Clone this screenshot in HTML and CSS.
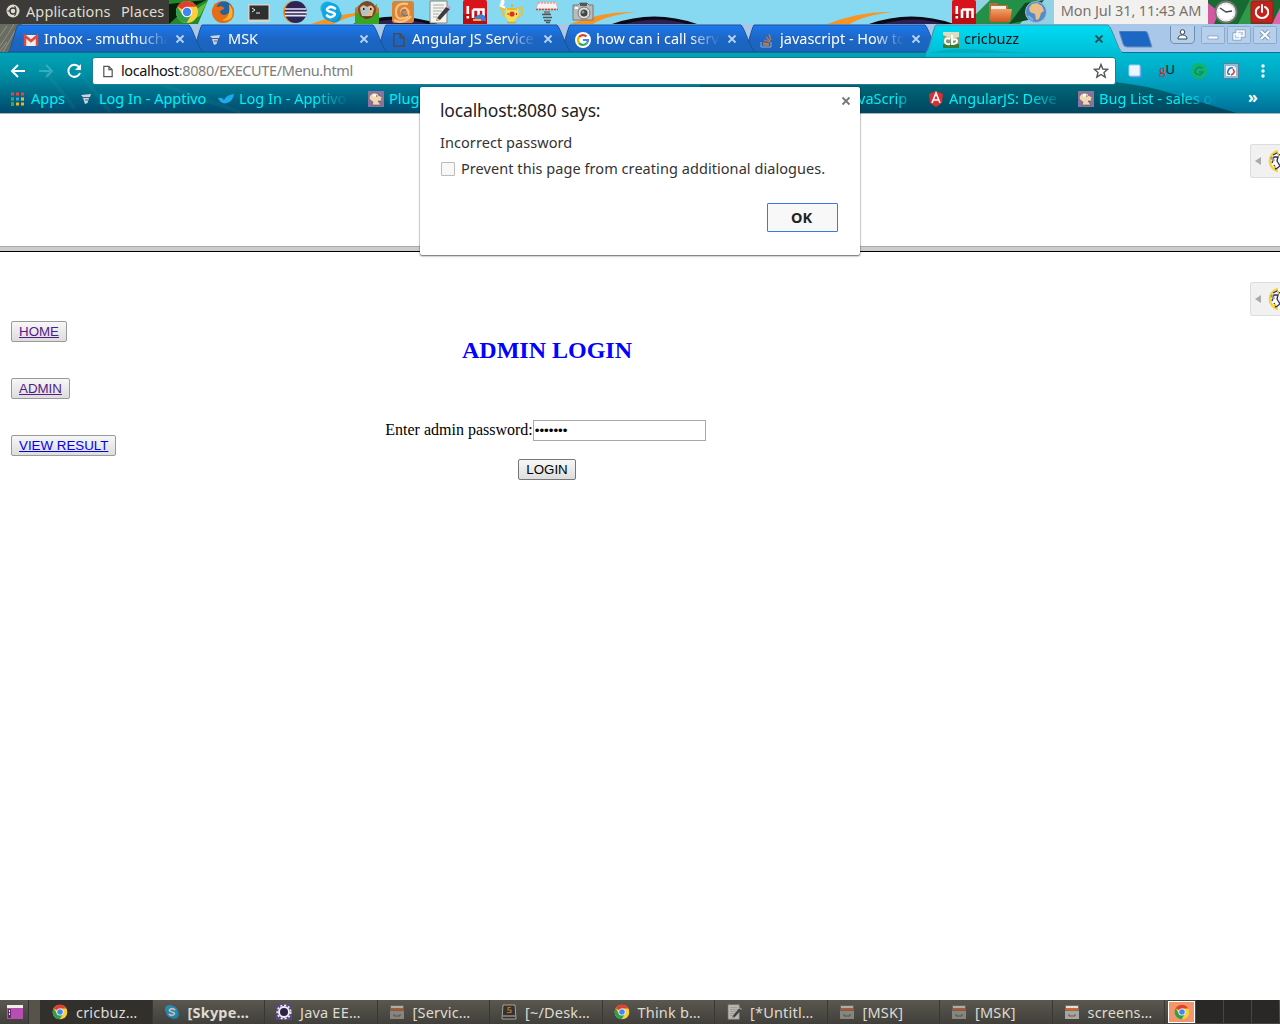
FILE: index.html
```html
<!DOCTYPE html>
<html lang="en">
<head>
<meta charset="utf-8">
<title>cricbuzz</title>
<link rel="stylesheet" href="styles.css">
</head>
<body>
<svg class="defs" width="0" height="0">
  <symbol id="chrome" viewBox="0 0 24 24">
    <circle cx="12" cy="12" r="11" fill="#f9cf3d"/>
    <path d="M12 12 2.400 6.500A11 11 0 0 1 21.600 6.800H12Z" fill="#e1402f"/>
    <path d="M2.400 6.500A11 11 0 0 0 11.500 23L16.500 14.500 12 12 7.500 14.700Z" fill="#2f9e4f"/>
    <circle cx="12" cy="12" r="5.300" fill="#fff"/><circle cx="12" cy="12" r="4.200" fill="#4285f4"/>
  </symbol>
  <symbol id="m" viewBox="0 0 24 24">
    <rect width="24" height="24" rx="2" fill="#d8131b"/><path d="M0 14H24V24H0Z" fill="#b90d14"/>
    <path d="M4.800 6V14M4.800 16V18.500M10 18V9.500M10 9.500H15.500V18M15.500 9.500H20.500V18" fill="none" stroke="#fff" stroke-width="2.600"/>
  </symbol>
  <symbol id="skype" viewBox="0 0 24 24">
    <circle cx="8.500" cy="8.500" r="7" fill="#18aee8"/><circle cx="15.500" cy="15.500" r="7" fill="#089ad8"/><circle cx="12" cy="12" r="9.200" fill="#12a5e2"/>
    <path d="M16 8.500Q12 5.500 9 8T12 12T14.500 16Q11 18.500 8 15.500" fill="none" stroke="#fff" stroke-width="2.600" stroke-linecap="round"/>
  </symbol>
  <symbol id="apptivo" viewBox="0 0 16 16">
    <path d="M3 4 13 3 12 6H5ZM5 7H11L9.500 12 7 13Z" fill="#cbd5e2"/><path d="M4 6.500H11M7 9H10" stroke="#49617e"/>
  </symbol>
  <symbol id="close" viewBox="0 0 10 10"><path d="M1.500 1.500 8.500 8.500M8.500 1.500 1.500 8.500" fill="none" stroke="currentColor" stroke-width="1.800"/></symbol>
  <symbol id="tabshape" viewBox="0 0 196 28">
    <path d="M0 28 C3 26 8 3 10 1H181C184 3 191 26 195 28Z" fill="url(#tabblue)" stroke="#1c5291"/>
  </symbol>
  <symbol id="camel" viewBox="0 0 16 16">
    <rect width="16" height="16" fill="#8b739d"/><path d="M1 7Q1 4 5 2Q8 1 10 4L14 6Q16 9 13 10L10 10 13 14H4L5 11 2 9Z" fill="#efd9b5" stroke="#65495b" stroke-width=".6"/><path d="M5 4.500H10" stroke="#fff" stroke-width="2"/><path d="M8 5H9.500M13 8h1" stroke="#333"/>
  </symbol>
  <symbol id="drawer" viewBox="0 0 16 16">
    <path d="M1 1H15V15H1Z" fill="#776f68"/><path d="M2 2H14V4H2Z" fill="#e8dfcd"/><path d="M2 4H14V6H2Z" fill="#d6642b"/><path d="M1 7H15V15H1Z" fill="#aaa59e"/><path d="M5 10V12H11V10" fill="none" stroke="#5b5752"/>
  </symbol>
  <symbol id="note" viewBox="0 0 24 24">
    <path d="M3 1H20V23H3Z" fill="#f4f4f1" stroke="#858580"/><path d="M6 5H17M6 8H17M6 11H15M6 14H12M6 17H10" stroke="#aaa"/><path d="M10 18 19 7 23 9 13 20 9 21Z" fill="#3c3b42"/><path d="M19 7 20 5 24 7 23 9Z" fill="#d796cb"/><path d="M10 18 13 20 9 21Z" fill="#ecc269"/>
  </symbol>
  <symbol id="eclipse" viewBox="0 0 24 24">
    <circle cx="11" cy="12" r="11" fill="#f29420"/><circle cx="12.700" cy="12" r="11" fill="#2c2455"/><path d="M2 9H23M2 12.300H24M2 15.600H23" stroke="#e8e4f3" stroke-width="1.700"/>
  </symbol>
  <symbol id="page" viewBox="0 0 12 14"><path d="M1.500 1.500H7L10.500 5V12.500H1.500ZM7 1.500V5H10.500" fill="none" stroke="currentColor" stroke-width="1.300"/></symbol>
  <symbol id="bee" viewBox="0 0 20 24">
    <circle cx="14" cy="12" r="10.500" fill="#fafafa"/><path d="M13 2A10.200 10.200 0 0 0 13 22" fill="none" stroke="#f4d341" stroke-width="2.500"/>
    <path d="M8 6 12 4 14 6 18 4M7 14 9 8 13 8 12 12 15 17 11 20 9 16" fill="none" stroke="#32304c" stroke-width="1.300"/><path d="M6 8 9 12M17 10 20 14" stroke="#999" stroke-width="2.500"/><path d="M9 18H11M15 15H17M12 5H14" stroke="#eac72e" stroke-width="1.800"/>
  </symbol>
  <linearGradient id="tabblue" x1="0" y1="0" x2="0" y2="1"><stop stop-color="#1b7af0"/><stop offset=".5" stop-color="#1d66c5"/><stop offset="1" stop-color="#1964bd"/></linearGradient>
  <linearGradient id="sea" x1="0" y1="0" x2="0" y2="1"><stop stop-color="#00a5b8"/><stop offset=".35" stop-color="#008fa5"/><stop offset="1" stop-color="#00476a"/></linearGradient>
  <linearGradient id="searight" x1="0" y1="0" x2="0" y2="1"><stop stop-color="#00bfd6"/><stop offset=".5" stop-color="#009fbd"/><stop offset="1" stop-color="#006d96"/></linearGradient>
  <linearGradient id="hill" x1="0" y1="0" x2="0" y2="1"><stop stop-color="#00707c"/><stop offset="1" stop-color="#00445f"/></linearGradient>
  <linearGradient id="cyan" x1="0" y1="0" x2="0" y2="1"><stop stop-color="#00dcf4"/><stop offset="1" stop-color="#00bfd5"/></linearGradient>
  <linearGradient id="folder" x1="0" y1="0" x2="0" y2="1"><stop stop-color="#f3a262"/><stop offset="1" stop-color="#d25220"/></linearGradient>
</svg>

<header class="panel">
  <svg class="art" viewBox="0 0 1280 24">
    <rect width="1280" height="24" fill="#86d9f1"/>
    <path d="M169 0H208L198 24H169Z" fill="#22882c"/><path d="M169 4 206 0 180 14 169 24Z" fill="#071f0b"/><path d="M182 19 207 2 200 16 184 23Z" fill="#63be3b"/>
    <g id="waves"><path d="M311 24Q345 11 376 12Q346 16 334 24Z" fill="#f79520"/><path d="M353 24Q395 9 438 24Z" fill="#080a14"/><path d="M366 24Q398 15 428 24Z" fill="#2c2057"/></g>
    <use href="#waves" x="259"/><use href="#waves" x="516"/>
    <path d="M976 0H1208V24H976Z" fill="#248f47"/><path d="M976 0H990L976 14M1020 24 1038 0H1054V24Z" fill="#91d2e5"/><path d="M1009 24 1025 3 1044 0 1028 20Z" fill="#0d4821"/>
    <path d="M1208 0H1280V24H1208Z" fill="#176b32"/><path d="M1208 3 1219 12 1214 24H1208Z" fill="#d458a1"/><path d="M1238 24 1250 0H1270L1250 24Z" fill="#2e9a4a"/><path d="M1272 24 1280 8V24Z" fill="#dd67ad"/>
  </svg>
  <div class="menu">
    <svg width="14" height="14" viewBox="0 0 14 14"><circle cx="7" cy="7" r="6.500" fill="#dfdbd2"/><circle cx="7" cy="7" r="3" fill="none" stroke="#3c3b37" stroke-width="1.400"/><path d="M8.500 2 10 4.500M1.500 7H4M8.500 12 10 9.500" stroke="#3c3b37"/></svg>
    <span class="apps-label">Applications</span><span class="places">Places</span>
  </div>
  <div class="launchers">
    <svg><use href="#chrome"/></svg>
    <svg viewBox="0 0 24 24"><circle cx="12" cy="12" r="11" fill="#e66a16"/><circle cx="13" cy="9.500" r="8" fill="#24629d"/><path d="M1 10 4 3 6 7Q13 5 13 9L9 11Q9 15 14 15L20 12 22 7Q26 22 12 23 2 22 1 10Z" fill="#e86c15"/><path d="M18 4Q23 9 21 17 17 22 11 20 20 18 18 4Z" fill="#f7b52b"/></svg>
    <svg viewBox="0 0 24 24"><rect x="1" y="4" width="22" height="18" rx="1" fill="#d3d3cf"/><path d="M2.500 5.500H21.500V19.500H2.500Z" fill="#2d302e"/><path d="M5 8 8 10 5 12M9 13H13" stroke="#eee" fill="none"/></svg>
    <svg><use href="#eclipse"/></svg>
    <svg><use href="#skype"/></svg>
    <svg viewBox="0 0 24 24"><path d="M0 24V9L4 13 3 5 9 8 14 3 17 8 22 4 21 12 24 11V24Z" fill="#38a525"/><circle cx="3.500" cy="10" r="3.500" fill="#bf783c"/><circle cx="20.500" cy="10" r="3.500" fill="#bf783c"/><circle cx="12" cy="10" r="9" fill="#7b4827"/><path d="M5 8Q8 3 12 7 17 3 19 9L17 16H7Z" fill="#e7bd89"/><circle cx="10" cy="11" r="4.500" fill="#a9c4da" opacity=".8"/><path d="M15 9h1.500M8 9h1.500" stroke="#222" stroke-width="2"/><path d="M8 17Q12 20 16 16" stroke="#632b15" fill="none"/><path d="M0 24 2 15 5 20 8 17 11 22 15 19 18 22 21 15 24 24Z" fill="#38a525"/></svg>
    <svg viewBox="0 0 24 24"><rect x="1" y="1" width="22" height="22" rx="3" fill="#d98539"/><path d="M17 4Q5 2 5 12T16 17Q20 11 14 8 9 9 11 13M3 20Q12 25 20 16" fill="none" stroke="#ffc27a" stroke-width="2.200"/><path d="M15 10Q10 9 11 13T17 15" fill="none" stroke="#6a7991" stroke-width="1.500"/></svg>
    <svg><use href="#note"/></svg>
    <svg viewBox="0 0 24 24"><use href="#m"/><path d="M12 17Q17 12 22 16L23 21H11Z" fill="#3c7eda"/><path d="M10 20H18" stroke="#eeb13d" stroke-width="2"/></svg>
    <svg viewBox="0 0 24 24"><path d="M2 0Q5 1 3 4T6 8" stroke="#fff" stroke-width="3.500" fill="none"/><path d="M18 8H23V14L18 18M7 10 2 8 4 14 8 18" stroke="#e6c23b" stroke-width="1.800" fill="none"/><path d="M7 8H19L20 15 16 20V23H9V20L6 16Z" fill="#f7dc58"/><path d="M13 4V7M8 9H18M8 22.500H17" stroke="#d9ad2b" stroke-width="1.600"/><circle cx="13" cy="14" r="2.600" fill="#d53323"/><path d="M8.500 14h1M17 14h1" stroke="#b12e1b" stroke-width="2"/></svg>
    <svg viewBox="0 0 24 24"><path d="M3 2H21L23 9H1Z" fill="#f7f3f3" stroke="#bbb"/><path d="M3 3H21" stroke="#d87a76" stroke-dasharray="2 1"/><path d="M1 9.500H23" stroke="#db4135" stroke-width="1.500" stroke-dasharray="2 1"/><path d="M9 11V14H15V11" fill="#888"/><path d="M7 14.500H16M8 17.500H17M9 20.500H16M11 22.500H15" stroke="#555" stroke-width="1.500"/></svg>
    <svg viewBox="0 0 24 24"><path d="M2 5H7L9 3H16L18 5H22V20H2Z" fill="#bbbcba" stroke="#777"/><rect x="9" y="3" width="7" height="3" fill="#555"/><circle cx="13" cy="13" r="6" fill="#ddd" stroke="#777"/><circle cx="13" cy="13" r="3.500" fill="#444"/><circle cx="12" cy="12" r="1.500" fill="#89a"/><path d="M4 8H7" stroke="#fff" stroke-width="2"/></svg>
  </div>
  <div class="tray">
    <svg><use href="#m"/></svg>
    <svg viewBox="0 0 24 24"><path d="M1 3H9L11 5H20V20H1Z" fill="#b96a38"/><path d="M3 6H18V18H3Z" fill="#eee"/><path d="M3 9H24L22 22H2Z" fill="url(#folder)"/></svg>
    <svg viewBox="0 0 24 24"><circle cx="12" cy="12" r="10.500" fill="#548bc9" stroke="#9abde1"/><path d="M8 4 13 3 18 6 20 11 17 13 15 19 12 20 11 14 6 12 5 8Z" fill="#edbd86"/><path d="M4 16 9 20" stroke="#81b2e6" stroke-width="2"/></svg>
    <time class="clock">Mon Jul 31, 11:43 AM</time>
    <svg class="dial" viewBox="0 0 24 24"><circle cx="12" cy="12" r="10.500" fill="#eee" stroke="#777772" stroke-width="1.800"/><circle cx="12" cy="12" r="8" fill="#fff" stroke="#ccc" stroke-dasharray="1 3"/><path d="M6 8 12 12 18 11" stroke="#444" stroke-width="1.500" fill="none"/></svg>
    <svg viewBox="0 0 24 24"><rect x="1" y="1" width="22" height="22" rx="2" fill="#c5201c" stroke="#92201c"/><path d="M9 7Q5 9 6 14 8 18 12 18T18 14Q19 9 15 7M12 5V12" stroke="#fff" stroke-width="2" fill="none" stroke-linecap="round"/></svg>
  </div>
</header>

<div class="browser">
  <svg class="art" viewBox="0 0 1280 90">
    <rect width="1280" height="90" fill="#a8c7e9"/><path d="M0 0H22L8 28H0Z" fill="#686c61"/><path d="M0 22 8 10 14 0M0 12 7 2M3 28 15 7M0 27 7 18" stroke="#96958a"/>
    <rect y="28" width="1280" height="62" fill="url(#sea)"/><path d="M926 28H1280V90H926Z" fill="url(#searight)"/>
    <path d="M700 61Q800 56 926 55Q1090 48 1160 66L1240 90H700Z" fill="url(#hill)"/>
    <g stroke="#3bacb5" fill="none" opacity=".1" stroke-width="4"><path d="M40 40 75 85M70 35 110 88M160 60 240 88M200 34 350 38"/></g>
    <path d="M0 28.500H926M1122 28.500H1280" stroke="#146e8f"/><path d="M0 89.500H1280" stroke="#a5b3bb"/>
  </svg>
  <div class="tabs">
    <div class="tab t1"><svg class="shape"><use href="#tabshape"/></svg><svg class="fav" viewBox="0 0 16 16"><path d="M1 3H15V14H1Z" fill="#eee"/><path d="M2 14V4L8 9 14 4V14" fill="none" stroke="#df4b3e" stroke-width="2.500"/></svg><span>Inbox - smuthucha</span><svg class="x"><use href="#close"/></svg></div>
    <div class="tab t2"><svg class="shape"><use href="#tabshape"/></svg><svg class="fav"><use href="#apptivo"/></svg><span>MSK</span><svg class="x"><use href="#close"/></svg></div>
    <div class="tab t3"><svg class="shape"><use href="#tabshape"/></svg><svg class="fav dark"><use href="#page"/></svg><span>Angular JS Service</span><svg class="x"><use href="#close"/></svg></div>
    <div class="tab t4"><svg class="shape"><use href="#tabshape"/></svg><svg class="fav" viewBox="0 0 16 16"><circle cx="8" cy="8" r="8" fill="#fff"/><g fill="none" stroke-width="2.200"><path d="M11.500 4.500A5 5 0 0 0 4 5" stroke="#e43e2b"/><path d="M4 5A5 5 0 0 0 4 11" stroke="#f4b400"/><path d="M4 11A5 5 0 0 0 11.500 11.500" stroke="#36a852"/><path d="M8 8H13Q13 10 11.500 11.500" stroke="#4285f4"/></g></svg><span>how can i call serv</span><svg class="x"><use href="#close"/></svg></div>
    <div class="tab t5"><svg class="shape"><use href="#tabshape"/></svg><svg class="fav" viewBox="0 0 16 16"><path d="M2 10V15H12V10" fill="none" stroke="#9baab8"/><path d="M4 13H10M4 11 10 12M5 8 11 10M7 5 11 9M10 2 12 8" stroke="#c27748" stroke-width="1.300"/></svg><span>javascript - How to</span><svg class="x"><use href="#close"/></svg></div>
    <div class="tab active"><svg class="shape" viewBox="0 0 196 28"><path d="M-2 29C2 26 5 3 8 1H180C184 3 190 26 194 29Z" fill="url(#cyan)"/><path d="M2 29Q22 23 57 26T115 29Z" fill="#079eae" opacity=".6"/><path d="M-2 28C2 26 5 3 8 1H180C184 3 190 26 194 28" fill="none" stroke="#4e899b"/></svg><svg class="fav" viewBox="0 0 16 16"><path d="M0 0H16V16H0Z" fill="#829c75"/><path d="M0 0H16V5L9 7 0 3Z" fill="#d9dfc0"/><path d="M0 12H16V16H0Z" fill="#397b36"/><path d="M7 7Q2 5 2 9T7 12M9 3V12Q14 12 14 9T9 8" fill="none" stroke="#fff" stroke-width="2"/></svg><span>cricbuzz</span><svg class="x"><use href="#close"/></svg></div>
    <svg class="newtab" viewBox="0 0 34 17"><path d="M0 0H26Q28 0 29 3L33 16H8Q5 16 4 13Z" fill="#1c67c3" stroke="#6d94bc"/></svg>
    <div class="winbtns">
      <svg width="25" height="18" viewBox="0 0 25 18"><path d="M.5 0V13Q.5 17.500 5 17.500H20Q24.500 17.500 24.500 13V0" fill="#b5cee9" stroke="#6f8fad"/><circle cx="12.500" cy="6" r="2.300" fill="#fff" stroke="#345"/><path d="M8 13Q8 9 12.500 9T17 13Z" fill="#fff" stroke="#345"/></svg>
      <svg width="24" height="18" viewBox="0 0 24 18"><rect x=".5" y=".5" width="23" height="17" rx="1" fill="#b6cfec" stroke="#8cabc9"/><rect x="7" y="10" width="10" height="3" fill="#fff" stroke="#7896b7" stroke-width=".7"/></svg>
      <svg width="24" height="18" viewBox="0 0 24 18"><rect x=".5" y=".5" width="23" height="17" rx="1" fill="#b6cfec" stroke="#8cabc9"/><g fill="#b6cfec" stroke="#7896b7" stroke-width="3"><path d="M10 5H17V10H10ZM7 8H13V13H7Z"/><path d="M10 5H17V10H10ZM7 8H13V13H7Z" stroke="#fff" stroke-width="1.500"/></g></svg>
      <svg width="24" height="18" viewBox="0 0 24 18"><rect x=".5" y=".5" width="23" height="17" rx="1" fill="#b6cfec" stroke="#8cabc9"/><path d="M8 5 16 13M16 5 8 13" stroke="#7896b7" stroke-width="4"/><path d="M8 5 16 13M16 5 8 13" stroke="#fff" stroke-width="2.200"/></svg>
    </div>
  </div>
  <div class="toolbar">
    <svg viewBox="0 0 16 16"><path d="M15 8H2M8 2 2 8 8 14" fill="none" stroke="#fff" stroke-width="2"/></svg>
    <svg viewBox="0 0 16 16" opacity=".25"><path d="M1 8H14M8 2 14 8 8 14" fill="none" stroke="#c2ffff" stroke-width="2"/></svg>
    <svg viewBox="0 0 16 16"><path d="M13 4A6 6 0 1 0 14 10" fill="none" stroke="#fff" stroke-width="2"/><path d="M15 1V7H9Z" fill="#fff"/></svg>
    <div class="omnibox"><svg class="doc"><use href="#page"/></svg><span class="url"><b>localhost</b>:8080/EXECUTE/Menu.html</span><svg class="star" viewBox="0 0 16 16"><path d="M8 1.500 9.800 6 14.700 6.300 11 9.400 12.200 14.200 8 11.500 3.800 14.200 5 9.400 1.300 6.300 6.200 6Z" fill="none" stroke="#555" stroke-width="1.400"/></svg></div>
    <div class="ext">
      <svg viewBox="0 0 14 14"><rect x="3" y="3" width="11" height="11" rx="1" fill="#3c93e8"/><rect x="1" y="1" width="11" height="11" rx="1" fill="#e9f5ff" stroke="#9ecdf6"/></svg>
      <span class="gu"><i>g</i>U</span>
      <svg viewBox="0 0 16 16"><circle cx="8" cy="8" r="8" fill="#15b368"/><path d="M11.500 5.500Q8 2.500 5 6T6 11Q10 13 12 9H8" stroke="#008d82" stroke-width="1.500" fill="none"/></svg>
      <svg viewBox="0 0 16 16"><rect x=".5" y=".5" width="15" height="15" fill="#94b9d0" stroke="#557fa1"/><path d="M3 3H11L13 5V13H3Z" fill="#f7f7f7"/><path d="M10 5Q6 4 5 8T7 11" stroke="#2875bf" stroke-width="1.500" fill="none"/><path d="M10 6Q13 10 8 12" stroke="#db3836" stroke-width="1.500" fill="none"/></svg>
      <svg viewBox="0 0 16 16" fill="#fff"><circle cx="8" cy="3" r="1.700"/><circle cx="8" cy="8" r="1.700"/><circle cx="8" cy="13" r="1.700"/></svg>
    </div>
  </div>
  <nav class="bookmarks">
    <a class="b1"><svg viewBox="0 0 16 16"><path d="M1 3H14" stroke="#f04438" stroke-width="3" stroke-dasharray="3 2"/><path d="M1 8H14" stroke="#39a0e8" stroke-width="3" stroke-dasharray="3 2"/><path d="M1 13H14" stroke="#f1b51c" stroke-width="3" stroke-dasharray="3 2"/><path d="M1 6.500h3v3H1ZM1 11.500h3v3H1Z" fill="#34a853"/><path d="M11 6.500h3v3H11Z" fill="#f1b51c"/></svg><span>Apps</span></a>
    <a class="b2"><svg><use href="#apptivo"/></svg><span>Log In - Apptivo</span></a>
    <a class="b3"><svg viewBox="0 0 16 16"><path d="M0 7Q4 6 6 9 8 4 16 3 15 10 9 12 3 14 0 7Z" fill="#1cabea"/></svg><span>Log In - Apptivo -</span></a>
    <a class="b4"><svg><use href="#camel"/></svg><span>Plug</span></a>
    <a class="b5"><span>JavaScrip</span></a>
    <a class="b6"><svg viewBox="0 0 16 16"><path d="M8 0 15 3 14 12 8 16 2 12 1 3Z" fill="#d92f32"/><path d="M4 12 8 2 12 12M6 9H10" stroke="#fff" stroke-width="1.600" fill="none"/></svg><span>AngularJS: Deve</span></a>
    <a class="b7"><svg><use href="#camel"/></svg><span>Bug List - sales or</span></a>
    <span class="more">»</span>
  </nav>
</div>

<main>
  <section class="top-frame"><div class="drawer"><i></i><svg><use href="#bee"/></svg></div></section>
  <div class="splitter"></div>
  <section class="bottom-frame">
    <nav class="links">
      <button><a class="visited">HOME</a></button>
      <button><a class="visited">ADMIN</a></button>
      <button><a>VIEW RESULT</a></button>
    </nav>
    <form class="login">
      <h2>ADMIN LOGIN</h2>
      <label><span>Enter admin password:</span><input type="password" value="1234567"></label>
      <button type="button">LOGIN</button>
    </form>
    <div class="drawer"><i></i><svg><use href="#bee"/></svg></div>
  </section>
</main>

<div class="dialog">
  <svg class="dismiss"><use href="#close"/></svg>
  <h1>localhost:8080 says:</h1>
  <p>Incorrect password</p>
  <div class="prevent"><i></i><span>Prevent this page from creating additional dialogues.</span></div>
  <button>OK</button>
</div>

<footer class="taskbar">
  <div class="desk"><svg viewBox="0 0 16 16"><path d="M0 1H16V15H0Z" fill="#b64eb3"/><path d="M0 1H16V4H0Z" fill="#eee"/><path d="M1 5H4V14H1Z" fill="#662a66"/><path d="M2 7h1M2 10h1" stroke="#fff" stroke-width="2"/></svg></div>
  <div class="task current"><svg><use href="#chrome"/></svg><span>cricbuz…</span></div>
  <div class="task bold"><svg opacity=".65"><use href="#skype"/></svg><span>[Skype…</span></div>
  <div class="task"><svg viewBox="0 0 16 16"><rect width="16" height="16" fill="#5b477e"/><circle cx="8" cy="8" r="5" fill="#2c2448" stroke="#eee" stroke-width="2"/><circle cx="8" cy="8" r="6.800" fill="none" stroke="#eee" stroke-width="1.500" stroke-dasharray="2 2"/></svg><span>Java EE…</span></div>
  <div class="task dim"><svg><use href="#drawer"/></svg><span>[Servic…</span></div>
  <div class="task"><svg viewBox="0 0 16 16"><path d="M2 1H14L15 15H1Z" fill="#34322f" stroke="#aaa398"/><path d="M2 12H14" stroke="#bbb"/><path d="M10 3.500H7V6H10V8.500H6" fill="none" stroke="#b3762f" stroke-width="1.200"/></svg><span>[~/Desk…</span></div>
  <div class="task"><svg><use href="#chrome"/></svg><span>Think b…</span></div>
  <div class="task dim"><svg><use href="#note"/></svg><span>[*Untitl…</span></div>
  <div class="task dim"><svg><use href="#drawer"/></svg><span>[MSK]</span></div>
  <div class="task dim"><svg><use href="#drawer"/></svg><span>[MSK]</span></div>
  <div class="task"><svg><use href="#drawer"/></svg><span>screens…</span></div>
  <div class="spaces"><div class="on"><svg><use href="#chrome"/></svg></div><div></div><div></div><div></div></div>
</footer>
</body>
</html>
```
FILE: styles.css
```css
* { box-sizing: border-box; }
body { margin: 0; width: 1280px; height: 1024px; overflow: hidden; display: flex; flex-direction: column; position: relative; background: #fff; font: 14.5px/20px "Noto Sans", sans-serif; }
svg { display: block; flex: none; }
.defs { position: absolute; }
.art { position: absolute; left: 0; top: 0; width: 100%; height: 100%; }

.panel { height: 24px; position: relative; display: flex; flex: none; }
.menu { width: 169px; background: #3d3b37; color: #dfdbd2; position: relative; display: flex; align-items: center; padding: 0 0 2px 6px; letter-spacing: .1px; }
.apps-label { width: 95px; margin-left: 6px; }
.launchers { position: relative; display: flex; gap: 12px; padding-left: 6px; }
.launchers svg, .tray svg { width: 24px; height: 24px; }
.tray { position: relative; display: flex; margin-left: auto; gap: 12px; padding-right: 6px; }
.clock { width: 154px; height: 24px; margin: 0 -6px; background: #f2f1f0; color: #77736d; text-align: center; white-space: nowrap; letter-spacing: -.1px; }

.browser { height: 90px; flex: none; position: relative; }
.tabs { position: relative; height: 28px; padding-left: 8px; display: flex; }
.tab { position: relative; isolation: isolate; width: 184px; flex: none; height: 28px; display: flex; align-items: center; padding: 3px 0 0 15px; color: #fff; }
.shape { position: absolute; left: 0; top: 0; width: 196px; height: 28px; overflow: visible; z-index: -1; }
.t1 { z-index: 5; } .t2 { z-index: 4; } .t3 { z-index: 3; } .t4 { z-index: 2; } .t5 { z-index: 1; }
.active { z-index: 8; color: #111; }
.fav { width: 16px; height: 16px; margin-right: 5px; }
.dark { color: #424d5b; }
.tab span { width: 124px; overflow: hidden; white-space: nowrap; margin: -4px 7px 0 0; -webkit-mask-image: linear-gradient(90deg, #000 75%, transparent); }
.x { width: 10px; height: 10px; margin-top: -2px; color: #b7d2f4; }
.active .x { color: #25515a; margin-left: -1px; }
.newtab { width: 34px; height: 17px; margin: 7px 0 0 7px; }
.winbtns { display: flex; gap: 2px; margin-left: 17px; padding-top: 2px; }
.winbtns svg:first-child { margin-right: 4px; }

.toolbar { position: relative; height: 36px; display: flex; align-items: center; padding: 2px 10px 0; gap: 12px; }
.toolbar > svg { width: 16px; height: 16px; }
.omnibox { width: 1024px; flex: none; height: 28px; margin: 0 -1px 0 -2px; background: #fff; border: 1px solid #197e91; border-radius: 3px; display: flex; align-items: center; padding: 0 6px 0 9px; }
.doc { width: 12px; height: 13px; color: #555; }
.url { color: #7d7d7d; margin: -3px 0 0 7px; flex: 1; letter-spacing: -.39px; }
.url b { font-weight: 400; color: #111; }
.star { width: 16px; height: 16px; }
.ext { display: flex; gap: 16px; width: 144px; align-items: center; }
.ext svg { width: 16px; height: 16px; }
.ext svg:first-child { width: 14px; height: 14px; margin: 0 1px; }
.gu { width: 16px; font-size: 13px; margin-top: -3px; color: #111; white-space: nowrap; }
.gu i { color: #d4262b; font-family: "Liberation Serif", serif; font-style: normal; }

.bookmarks { position: relative; height: 24px; display: flex; align-items: center; color: #00eff8; padding: 0 0 2px 10px; }
.bookmarks a { display: flex; align-items: center; gap: 5px; flex: none; overflow: hidden; white-space: nowrap; }
.bookmarks a span { margin-top: -2px; }
.bookmarks svg { width: 16px; height: 16px; }
.b1 { width: 68px; } .b2 { width: 140px; }
.b3 { width: 130px; margin-right: 20px; }
.b4 { width: 420px; margin-right: 58px; }
.b5 { width: 68px; margin-right: 14px; }
.b6 { width: 136px; margin-right: 14px; }
.b7 { width: 140px; }
.b3, .b5, .b6, .b7 { -webkit-mask-image: linear-gradient(90deg, #000 75%, transparent); }
.more { color: #fff; font-weight: 700; font-size: 16px; margin-left: 30px; margin-top: -4px; }

main { flex: 1; display: flex; flex-direction: column; }
.top-frame { height: 132px; display: flex; justify-content: flex-end; align-items: flex-start; padding-top: 30px; }
.splitter { height: 6px; background: #ccc; border-top: 1px solid #aaa; border-bottom: 1px solid #000; }
.drawer { width: 30px; height: 34px; border: 1px solid #ddd; border-right: 0; border-radius: 3px 0 0 3px; background: #f1f1f1; display: flex; align-items: center; gap: 4px; padding-left: 4px; overflow: hidden; }
.drawer i { border: 4px solid transparent; border-right: 6px solid #aaa; border-left: 0; }
.drawer svg { width: 20px; height: 24px; }
.bottom-frame { flex: 1; display: flex; align-items: flex-start; }
.links { width: 374px; padding: 69px 0 0 11px; display: flex; flex-direction: column; align-items: flex-start; gap: 36px; }
.bottom-frame button { height: 21px; padding: 1px 7px 0; border: 1px solid #999; border-radius: 2px; background: linear-gradient(#f7f7f7, #ddd); font: 13.333px/18px "Liberation Sans", sans-serif; color: #000; }
.links a { color: #00e; text-decoration: underline; }
.links .visited { color: #551a8b; }
.bottom-frame .login button { border-color: #777; margin-top: 18px; }
.login { width: 346px; padding-top: 84px; display: flex; flex-direction: column; align-items: center; font: 16px/18px "Liberation Serif", serif; }
.login h2 { margin: 0 0 56px; font: bold 24px/28px "Liberation Serif", serif; color: #00f; }
.login label { display: flex; align-items: center; white-space: nowrap; height: 21px; margin-right: 3px; }
.login label span { margin-top: -2px; }
.login input { width: 173px; height: 21px; border: 1px solid #a9a9a9; padding: 1px; font: 13.333px "Liberation Sans", sans-serif; }
.bottom-frame .drawer { margin: 30px 0 0 auto; }

.dialog { position: absolute; left: 420px; top: 87px; width: 440px; height: 168px; z-index: 10; background: #fff; border-radius: 2px; box-shadow: 0 1px 2px rgba(0,0,0,.6), 0 0 1px rgba(0,0,0,.5); padding: 11px 22px 0 20px; color: #333; display: flex; flex-direction: column; letter-spacing: .06px; }
.dismiss { position: absolute; right: 9px; top: 9px; width: 10px; height: 10px; color: #777; }
.dialog h1 { margin: 0; font: 400 17.5px/25px "Noto Sans", sans-serif; letter-spacing: -.15px; color: #222; }
.dialog p { margin: 9px 0 8px; }
.prevent { display: flex; align-items: center; gap: 6px; margin-left: 1px; white-space: nowrap; }
.prevent i { width: 14px; height: 14px; background: #f8f8f8; border: 1px solid #bbb; border-radius: 1px; }
.prevent span { margin-top: -2px; }
.dialog button { width: 71px; height: 29px; margin: 25px 0 0 auto; padding: 0 8px 2px 6px; border: 1px solid #3b78e7; border-radius: 1px; background: #f8f8f8; font: bold 14.5px "Noto Sans", sans-serif; color: #222; }

.taskbar { height: 24px; flex: none; display: flex; background: linear-gradient(#5a574f, #413f3b); color: #dfdbd2; }
.taskbar svg { width: 16px; height: 16px; }
.desk { width: 40px; padding: 4px 0 0 7px; background: linear-gradient(90deg, transparent 28px, #35332f 28px, #35332f 29px, #57534b 29px); }
.task { width: 112.5px; flex: none; display: flex; align-items: center; gap: 8px; padding-left: 11px; border-right: 1px solid #393733; white-space: nowrap; letter-spacing: .2px; }
.task span { margin-top: -1px; }
.current { background: #32302d; padding-left: 12px; }
.bold { font-weight: 700; }
.dim svg { opacity: .65; }
.spaces { display: flex; gap: 1px; margin-left: 3px; background: #474540; }
.spaces div { width: 27px; height: 23px; background: #292826; }
.spaces .on { height: 22px; margin-top: 1px; padding: 2px 5px; background: #f2966d; border: 1px solid #fff; }
```
